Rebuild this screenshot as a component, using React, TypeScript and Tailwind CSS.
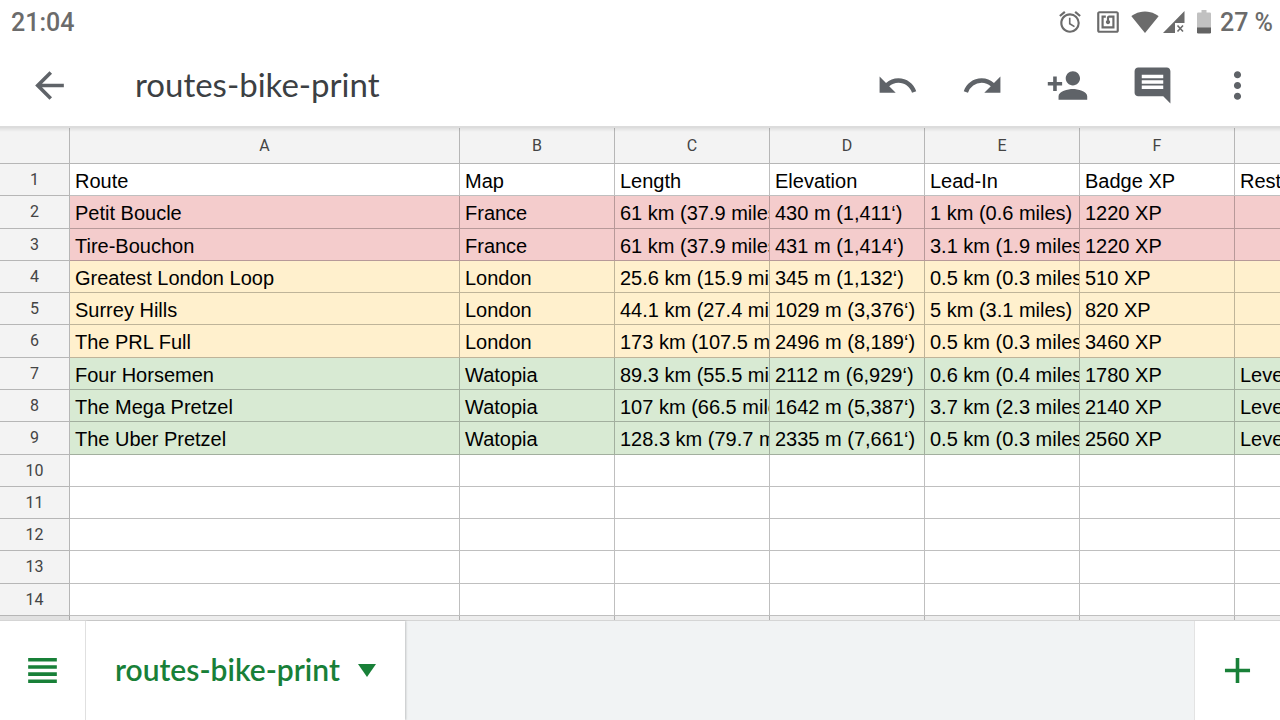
import { useState } from 'react';
import {
  MdAdd,
  MdAlarm,
  MdArrowBack,
  MdComment,
  MdMoreVert,
  MdNfc,
  MdPersonAdd,
  MdRedo,
  MdSignalWifi4Bar,
  MdUndo,
  MdViewHeadline,
} from 'react-icons/md';

interface SheetRow {
  fill: string;
  height: string;
  cells: string[];
}

const columns = ['A', 'B', 'C', 'D', 'E', 'F', ''];

const WHITE = 'bg-white';
const RED = 'bg-[#f4cccc]';
const YELLOW = 'bg-[#fff0cd]';
const GREEN = 'bg-[#d8ead3]';

const SHORT = 'h-8';
const TALL = 'h-[33px]';

const rows: SheetRow[] = [
  { fill: WHITE, height: SHORT, cells: ['Route', 'Map', 'Length', 'Elevation', 'Lead-In', 'Badge XP', 'Restriction'] },
  { fill: RED, height: TALL, cells: ['Petit Boucle', 'France', '61 km (37.9 miles)', '430 m (1,411‘)', '1 km (0.6 miles)', '1220 XP', ''] },
  { fill: RED, height: SHORT, cells: ['Tire-Bouchon', 'France', '61 km (37.9 miles)', '431 m (1,414‘)', '3.1 km (1.9 miles)', '1220 XP', ''] },
  { fill: YELLOW, height: SHORT, cells: ['Greatest London Loop', 'London', '25.6 km (15.9 miles)', '345 m (1,132‘)', '0.5 km (0.3 miles)', '510 XP', ''] },
  { fill: YELLOW, height: SHORT, cells: ['Surrey Hills', 'London', '44.1 km (27.4 miles)', '1029 m (3,376‘)', '5 km (3.1 miles)', '820 XP', ''] },
  { fill: YELLOW, height: TALL, cells: ['The PRL Full', 'London', '173 km (107.5 miles)', '2496 m (8,189‘)', '0.5 km (0.3 miles)', '3460 XP', ''] },
  { fill: GREEN, height: SHORT, cells: ['Four Horsemen', 'Watopia', '89.3 km (55.5 miles)', '2112 m (6,929‘)', '0.6 km (0.4 miles)', '1780 XP', 'Level'] },
  { fill: GREEN, height: SHORT, cells: ['The Mega Pretzel', 'Watopia', '107 km (66.5 miles)', '1642 m (5,387‘)', '3.7 km (2.3 miles)', '2140 XP', 'Level'] },
  { fill: GREEN, height: TALL, cells: ['The Uber Pretzel', 'Watopia', '128.3 km (79.7 miles)', '2335 m (7,661‘)', '0.5 km (0.3 miles)', '2560 XP', 'Level'] },
  { fill: WHITE, height: SHORT, cells: [] },
  { fill: WHITE, height: SHORT, cells: [] },
  { fill: WHITE, height: SHORT, cells: [] },
  { fill: WHITE, height: TALL, cells: [] },
  { fill: WHITE, height: SHORT, cells: [] },
  { fill: WHITE, height: SHORT, cells: [] },
];

const actions = [
  { label: 'Undo', icon: MdUndo },
  { label: 'Redo', icon: MdRedo },
  { label: 'Share', icon: MdPersonAdd },
  { label: 'Comments', icon: MdComment },
  { label: 'More options', icon: MdMoreVert },
];

function SignalIcon() {
  return (
    <svg viewBox="0 0 22 22" className="w-[22px] h-[22px]" fill="currentColor" aria-hidden="true">
      <path d="M21.5 0v12H12v10H0z" />
      <path d="M14.5 14.5l5.500 6M20 14.5l-5.500 6" stroke="currentColor" strokeWidth="1.6" />
    </svg>
  );
}

function BatteryIcon() {
  return (
    <svg viewBox="0 0 14 24" className="w-[14px] h-6" aria-hidden="true">
      <path d="M4.500 0h5v2.500h3.300q1.200 0 1.200 1.200V18H0V3.700q0-1.200 1.200-1.200h3.300z" fill="#c1c1c1" />
      <path d="M0 17.500h14v4.800q0 1.200-1.200 1.200H1.200q-1.200 0-1.200-1.200z" fill="#636363" />
    </svg>
  );
}

function StatusBar() {
  return (
    <div className="flex items-center justify-between h-11 pl-[11px] pr-[7px] text-[#6b6b6b] font-medium text-[25px] leading-none">
      <span>21:04</span>
      <div className="flex items-center">
        <MdAlarm className="w-[26px] h-[26px] mr-3" />
        <MdNfc className="w-[26px] h-[26px] mr-[10px]" />
        <MdSignalWifi4Bar className="w-7 h-7 mr-1" />
        <SignalIcon />
        <span className="ml-3 mr-[9px]">
          <BatteryIcon />
        </span>
        <span>27 %</span>
      </div>
    </div>
  );
}

function Toolbar({ title }: { title: string }) {
  return (
    <header className="flex items-center h-[82px] text-[#5f6368]">
      <button aria-label="Back" className="flex justify-center w-[99px]">
        <MdArrowBack className="w-[43px] h-[43px]" />
      </button>
      <h1 className="flex-1 pl-9 font-['Lato'] text-[33px] text-[#3c4043]">{title}</h1>
      {actions.map(({ label, icon: Icon }) => (
        <button key={label} aria-label={label} className="flex justify-center w-[85px]">
          <Icon className="w-[43px] h-[43px]" />
        </button>
      ))}
    </header>
  );
}

function Sheet() {
  return (
    <main className="relative flex-1 min-h-0 overflow-hidden bg-white">
      <table className="table-fixed border-separate border-spacing-0 w-[1390px]">
        <colgroup>
          <col className="w-[70px]" />
          <col className="w-[390px]" />
          {columns.slice(1).map((_, i) => (
            <col key={i} className="w-[155px]" />
          ))}
        </colgroup>
        <thead>
          <tr className="h-[38px] bg-[#f3f3f3] text-base text-[#444]">
            <th className="p-0 border-r border-b border-black/25" />
            {columns.map((name, i) => (
              <th key={i} scope="col" className="p-0 pt-0.5 border-r border-b border-black/25 font-normal">
                {name}
              </th>
            ))}
          </tr>
        </thead>
        <tbody>
          {rows.map((row, r) => (
            <tr key={r} className={row.height}>
              <th
                scope="row"
                className="p-0 border-r border-b border-black/25 bg-[#f3f3f3] align-top text-base leading-[31px] font-normal text-[#444]"
              >
                {r + 1}
              </th>
              {columns.map((_, c) => (
                <td
                  key={c}
                  className={`p-0 pl-[5px] pt-[3px] border-r border-b border-black/25 align-top overflow-hidden whitespace-nowrap font-['Liberation_Sans'] text-xl leading-7 text-black ${row.fill}`}
                >
                  {row.cells[c]}
                </td>
              ))}
            </tr>
          ))}
        </tbody>
      </table>
      {/* edge shadows */}
      <div className="absolute inset-x-0 top-0 h-0.5 bg-[#dcdcdc]" />
      <div className="absolute inset-x-0 top-0.5 h-1 bg-linear-to-b from-black/8 to-transparent" />
      <div className="absolute inset-x-0 bottom-0 h-1 bg-black/7" />
    </main>
  );
}

function SheetTabs({ tabs }: { tabs: string[] }) {
  const [active, setActive] = useState(tabs[0]);

  return (
    <footer className="flex h-[100px] bg-[#f1f3f4] border-t border-[#d5d5d5] text-[#188038]">
      <button aria-label="All sheets" className="flex items-center justify-center w-[86px] bg-white border-r border-[#e3e3e3]">
        <MdViewHeadline className="w-[43px] h-[43px]" />
      </button>
      {tabs.map((tab) => (
        <button
          key={tab}
          onClick={() => setActive(tab)}
          className={`flex items-center gap-[18px] px-[29px] font-['Lato'] text-[30px] font-semibold ${
            tab === active ? 'bg-white shadow-[1px_0_2px_rgba(0,0,0,0.2)]' : ''
          }`}
        >
          <span className="pb-0.5">{tab}</span>
          <svg viewBox="0 0 18 13" className="w-[18px] h-[13px]" fill="currentColor" aria-hidden="true">
            <path d="M0 0h18l-9 13z" />
          </svg>
        </button>
      ))}
      <button aria-label="Add sheet" className="flex items-center justify-center w-[86px] ml-auto bg-white border-l border-[#e3e3e3]">
        <MdAdd className="w-[43px] h-[43px]" />
      </button>
    </footer>
  );
}

export default function App() {
  return (
    <div className="flex flex-col h-screen overflow-hidden bg-white font-['Roboto']">
      <StatusBar />
      <Toolbar title="routes-bike-print" />
      <Sheet />
      <SheetTabs tabs={['routes-bike-print']} />
    </div>
  );
}
